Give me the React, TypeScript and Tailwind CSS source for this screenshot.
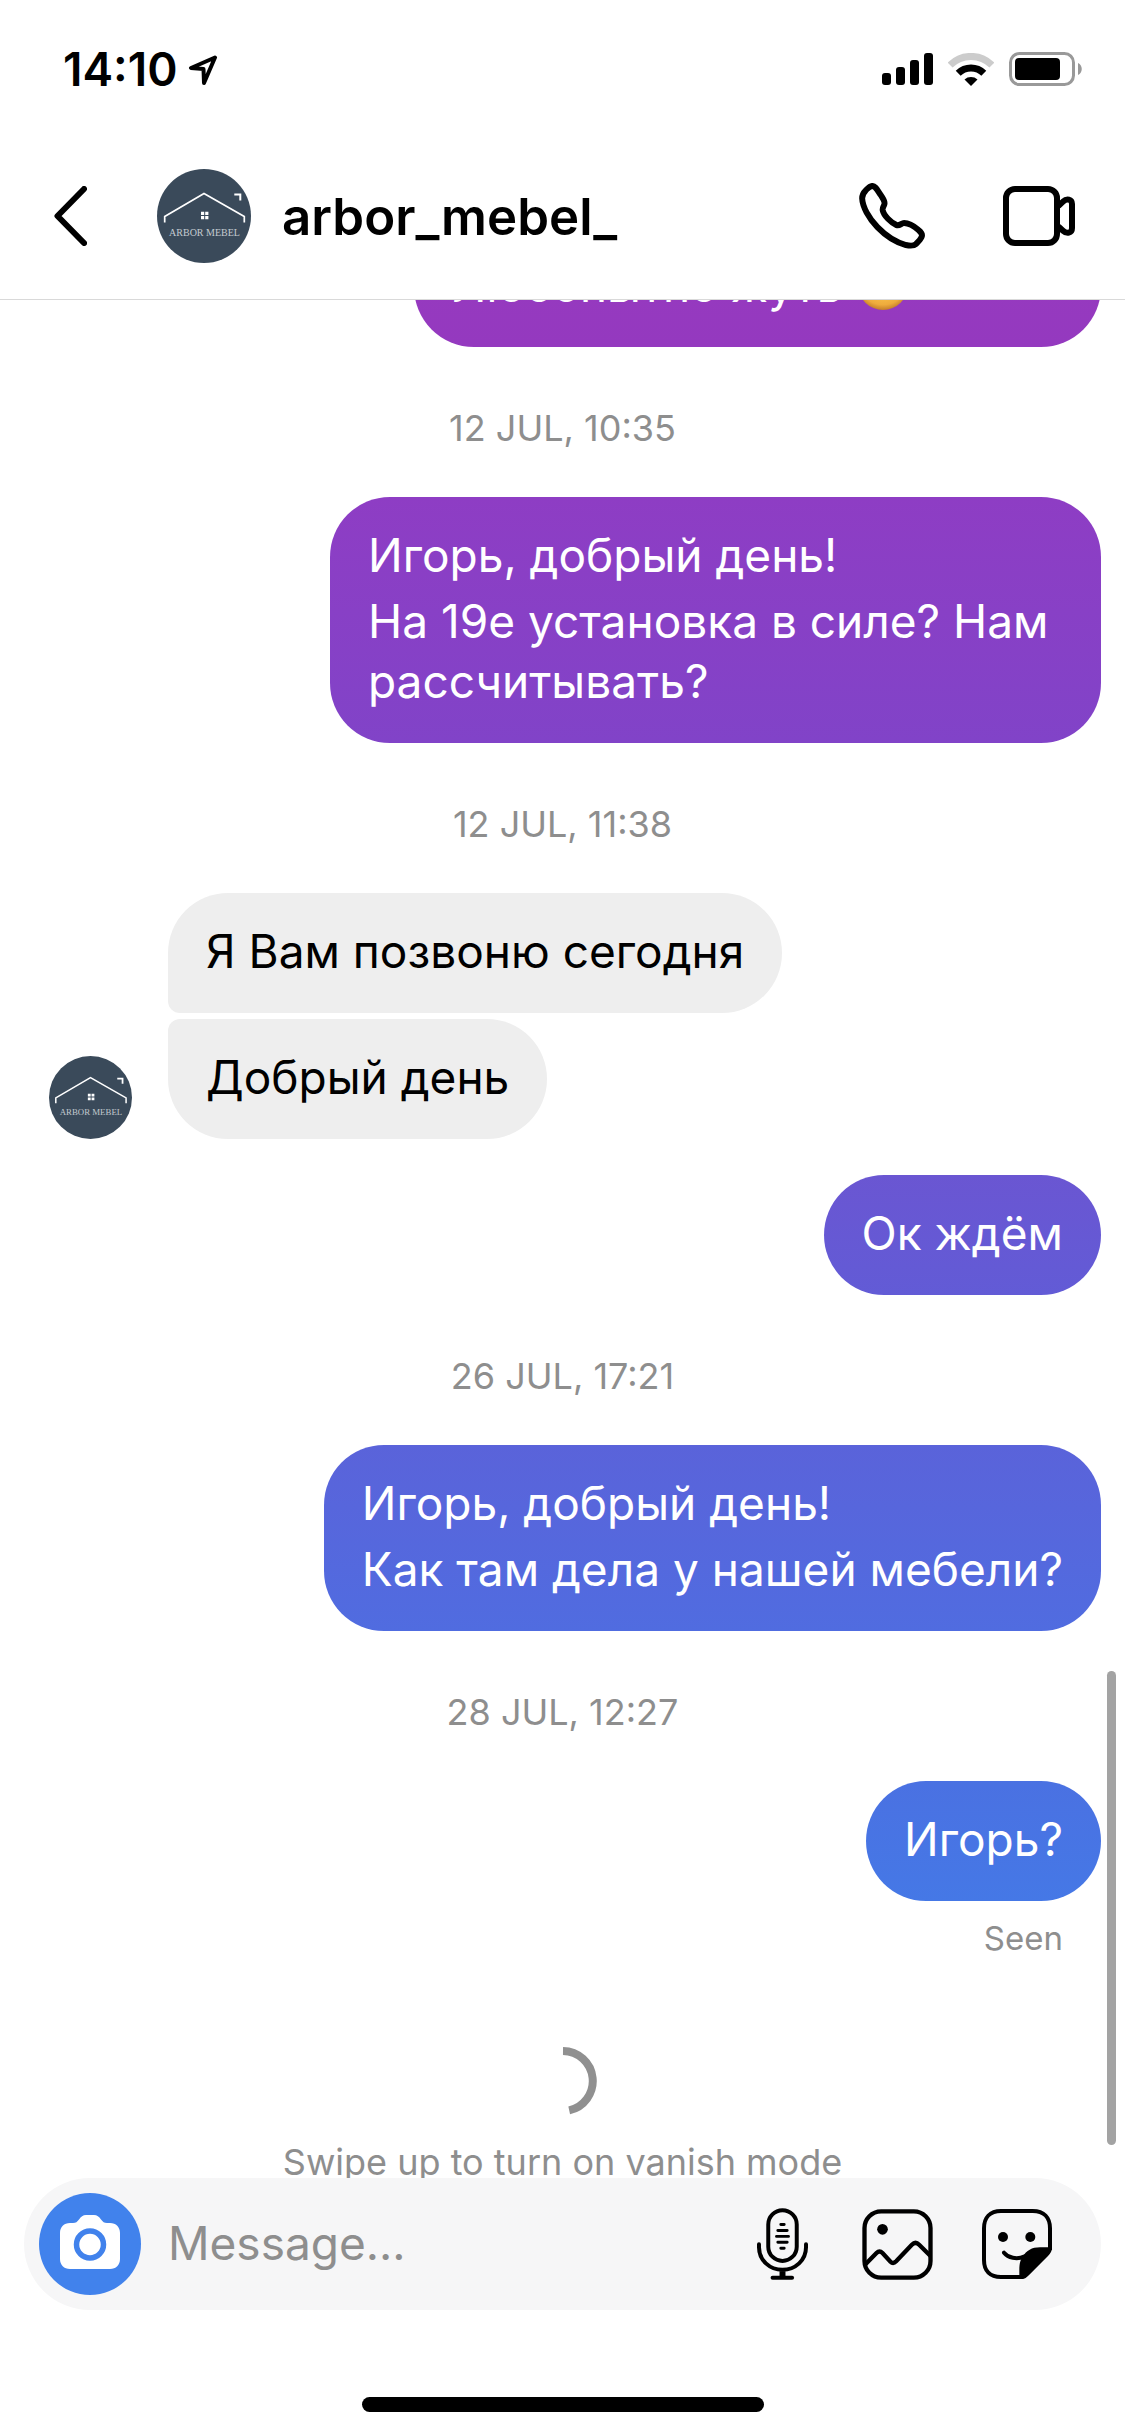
import type { ReactNode } from "react";

function Avatar({ className }: { className: string }) {
  return (
    <svg viewBox="0 0 94 94" className={className} role="img" aria-label="Arbor Mebel">
      <circle cx="47" cy="47" r="47" fill="#3a4a5a" />
      <g fill="none" stroke="#ffffff">
        <path d="M7.7 53.5V47.5L47 24.5L87.3 47.5V53.5" strokeWidth="1.7" />
        <path d="M77.3 25.5H83.3V31.5" strokeWidth="2" />
      </g>
      <path d="M44 42.7h3.2v3.2H44zM48.2 42.7h3.2v3.2h-3.2zM44 47h3.2v3.2H44zM48.2 47h3.2v3.2h-3.2z" fill="#ffffff" />
      <text x="47.5" y="67" textAnchor="middle" fontSize="10" fill="#c3cad0" fontFamily="Liberation Serif, serif">
        ARBOR MEBEL
      </text>
    </svg>
  );
}

function StatusBar() {
  return (
    <div className="flex h-[132px] shrink-0 items-center pl-[63px] pr-[43px] pt-[6px]">
      <span className="text-[46px] leading-[54px] font-semibold">14:10</span>
      <svg viewBox="0 0 30 31" className="ml-[10px] h-[31px] w-[30px]" fill="none" stroke="#000" strokeWidth="4" strokeLinejoin="round">
        <path d="M27 3.5L3 14L15.5 15L16 29Z" />
      </svg>
      <div className="ml-auto flex items-center">
        <svg viewBox="0 0 51 32" className="h-8 w-[51px]">
          <rect x="0" y="20" width="9" height="12" rx="3" />
          <rect x="14" y="14" width="9" height="18" rx="3" />
          <rect x="28" y="7" width="9" height="25" rx="3" />
          <rect x="42" y="0" width="9" height="32" rx="3" />
        </svg>
        <svg viewBox="0 0 46 33" className="ml-[15px] h-[33px] w-[46px]" fill="none" strokeWidth="7">
          <path d="M2.1 12.1A29.5 29.5 0 0 1 43.9 12.1" stroke="#cccccc" />
          <path d="M10.2 20.2A18.2 18.2 0 0 1 35.8 20.2" stroke="#000" />
          <path d="M23 33L16.5 26.5A9.8 9.8 0 0 1 29.5 26.5Z" fill="#000" />
        </svg>
        <svg viewBox="0 0 73 34" className="ml-[15px] h-[34px] w-[73px]">
          <rect x="1.5" y="1.5" width="63" height="31" rx="9" fill="none" stroke="#999999" strokeWidth="3" />
          <rect x="6" y="6" width="45" height="22" rx="4" />
          <path d="M69 11C74 13 74 21 69 23Z" fill="#999999" />
        </svg>
      </div>
    </div>
  );
}

function ChatHeader() {
  return (
    <header className="flex h-[168px] shrink-0 items-center border-b border-[#d9d9d9] pl-[54px] pr-[50px]">
      <button type="button" aria-label="Back">
        <svg viewBox="0 0 33 60" className="h-[60px] w-[33px]" fill="none" stroke="#000" strokeWidth="6" strokeLinecap="round" strokeLinejoin="round">
          <path d="M30 3L3.5 30L30 57" />
        </svg>
      </button>
      <Avatar className="ml-[70px] size-[94px]" />
      <h1 className="ml-[31px] pt-[2px] text-[51px] leading-[60px] font-semibold">arbor_mebel_</h1>
      <button type="button" aria-label="Audio call" className="ml-auto">
        <svg viewBox="57 428 198 199" className="size-[66px]" fill="none" stroke="#000" strokeWidth="18">
          <path d="M96 437C106 436 113 452 122 464C130 477 136 484 133 492C131 499 127 502 128 510C131 526 153 548 170 555C178 558 184 550 190 549C204 548 222 558 236 570C246 578 248 585 245 591C242 598 234 606 228 612C222 618 208 617 198 615C172 608 138 588 112 561C86 534 67 500 66 474C66 462 71 456 77 450C84 443 88 438 96 437Z" />
        </svg>
      </button>
      <button type="button" aria-label="Video call" className="ml-[78px]">
        <svg viewBox="489 438 216 180" className="h-[60px] w-[72px]" fill="none" stroke="#000" strokeWidth="18">
          <rect x="498" y="447" width="153" height="162" rx="27" />
          <path d="M655 498L669 485C680 474 696 477 696 492V564C696 580 680 582 669 572L655 559" />
        </svg>
      </button>
    </header>
  );
}

function DateLabel({ children }: { children: ReactNode }) {
  return (
    <time className="flex h-[150px] shrink-0 items-center justify-center pt-3 text-[36px] leading-[42px] text-[#8e8e8e]">
      {children}
    </time>
  );
}

const bubbleBase = "px-[38px] pt-[28px] pb-[32px] text-[46px] leading-[60px]";

function Sent({ tone, children }: { tone: string; children: ReactNode }) {
  return (
    <div className={`${bubbleBase} mr-6 shrink-0 self-end rounded-[60px] bg-linear-to-b text-white ${tone}`}>
      {children}
    </div>
  );
}

function Received({ corner, children }: { corner: string; children: ReactNode }) {
  return <div className={`${bubbleBase} rounded-[60px] bg-[#eeeeee] text-black ${corner}`}>{children}</div>;
}

function SmileEmoji() {
  return (
    <svg viewBox="0 0 50 50" className="inline-block size-[50px]" role="img" aria-label="Smile">
      <defs>
        <radialGradient id="face" cx="0.5" cy="0.4" r="0.62">
          <stop offset="0.5" stopColor="#f9c04a" />
          <stop offset="0.8" stopColor="#eeab3c" />
          <stop offset="1" stopColor="#bd7526" />
        </radialGradient>
      </defs>
      <circle cx="25" cy="25" r="25" fill="url(#face)" />
      <circle cx="17" cy="19" r="3" fill="#5b3413" />
      <circle cx="33" cy="19" r="3" fill="#5b3413" />
      <path d="M14 27Q25 38 36 27" fill="none" stroke="#5b3413" strokeWidth="3" />
    </svg>
  );
}

function Composer() {
  return (
    <form
      className="mx-6 flex h-[132px] shrink-0 items-center rounded-full bg-[#f6f6f7] pl-[15px] pr-[49px]"
      onSubmit={(event) => event.preventDefault()}
    >
      <button type="button" aria-label="Camera" className="flex size-[102px] shrink-0 items-center justify-center rounded-full bg-[#4182ec]">
        <svg viewBox="0 0 60 54" className="mb-1 h-[54px] w-[60px]">
          <path
            d="M10 8H13C16 8 17 7 19 4.500C21 1.500 23 0 26 0H34C37 0 39 1.500 41 4.500C43 7 44 8 47 8H50C56 8 60 12 60 18V44C60 50 56 54 50 54H10C4 54 0 50 0 44V18C0 12 4 8 10 8Z"
            fill="#ffffff"
          />
          <circle cx="30" cy="29.500" r="13.500" fill="#ffffff" stroke="#4182ec" strokeWidth="5.500" />
        </svg>
      </button>
      <input
        type="text"
        aria-label="Message"
        placeholder="Message..."
        className="ml-[27px] min-w-0 flex-1 bg-transparent pb-[2px] text-[46px] leading-[60px] outline-none placeholder:text-[#8e8e8e]"
      />
      <button type="button" aria-label="Voice message" className="shrink-0">
        <svg viewBox="82 54 154 216" className="h-[72px] w-[51px]" fill="none" stroke="#000" strokeWidth="12" strokeLinecap="round">
          <rect x="116" y="60" width="86" height="153" rx="43" />
          <path d="M88 163V172C88 211 120 240 159 240S230 211 230 172V163" />
          <path d="M159 244V260" strokeWidth="18" strokeLinecap="butt" />
          <path d="M129 264H188" />
          <path d="M154 103H164M145 121H173M141 139H177M145 157H173M154 175H164" strokeWidth="9" />
        </svg>
      </button>
      <button type="button" aria-label="Gallery" className="ml-[54px] shrink-0">
        <svg viewBox="397 57 212 213" className="size-[71px]" fill="none" stroke="#000" strokeWidth="13">
          <rect x="404" y="64" width="198" height="199" rx="50" />
          <circle cx="458" cy="118" r="16" fill="#000" stroke="none" />
          <path d="M404 226L440 189Q449 180 458 189L482 215Q490 223 499 214L546 164Q557 153 568 164L602 198" />
        </svg>
      </button>
      <button type="button" aria-label="Sticker" className="ml-[49px] shrink-0">
        <svg viewBox="756 57 210 210" className="size-[70px]" fill="none" stroke="#000" strokeWidth="12">
          <path d="M880 261H813C780 261 762 243 762 210V115C762 82 780 63 813 63H908C942 63 960 82 960 115V180" />
          <circle cx="819" cy="141" r="15" fill="#000" stroke="none" />
          <circle cx="901" cy="141" r="15" fill="#000" stroke="none" />
          <path d="M822 188C834 203 860 210 884 199" strokeLinecap="round" />
          <path
            d="M868 266V240C868 218 872 208 878 200C890 182 905 172 930 172H966C966 184 962 190 954 198L898 254C890 262 884 267 876 267Z"
            fill="#000"
            stroke="none"
          />
        </svg>
      </button>
    </form>
  );
}

export default function App() {
  return (
    <div className="flex h-screen flex-col bg-white font-['Inter','Noto_Sans',sans-serif] text-black">
      <StatusBar />
      <ChatHeader />
      <main className="relative flex min-h-0 flex-1 flex-col justify-end overflow-hidden">
        <Sent tone="from-[#983abf] to-[#9439bf] w-[687px] flex items-center gap-4 whitespace-nowrap">
          Любопытно жуть <SmileEmoji />
        </Sent>
        <DateLabel>12 JUL, 10:35</DateLabel>
        <Sent tone="from-[#8e3dc4] to-[#8143c8] max-w-[771px]">
          <p>Игорь, добрый день!</p>
          <p className="mt-[6px]">На 19е установка в силе? Нам рассчитывать?</p>
        </Sent>
        <DateLabel>12 JUL, 11:38</DateLabel>
        <div className="flex shrink-0 items-end">
          <Avatar className="ml-[49px] size-[83px]" />
          <div className="ml-9 flex flex-col items-start gap-[6px]">
            <Received corner="rounded-bl-[12px]">Я Вам позвоню сегодня</Received>
            <Received corner="rounded-tl-[12px]">Добрый день</Received>
          </div>
        </div>
        <div className="mt-9 flex shrink-0 flex-col">
          <Sent tone="from-[#6a56d2] to-[#625bd6]">Ок ждём</Sent>
        </div>
        <DateLabel>26 JUL, 17:21</DateLabel>
        <Sent tone="from-[#5a63da] to-[#506ce0]">
          <p>Игорь, добрый день!</p>
          <p className="mt-[6px]">Как там дела у нашей мебели?</p>
        </Sent>
        <DateLabel>28 JUL, 12:27</DateLabel>
        <Sent tone="from-[#4a71e2] to-[#4578e6]">Игорь?</Sent>
        <p className="mt-4 mr-[62px] shrink-0 self-end text-[33px] leading-[42px] text-[#8e8e8e]">Seen</p>
        <svg viewBox="0 0 68 68" className="mt-[88px] size-[68px] shrink-0 self-center" fill="none" stroke="#909090" strokeWidth="8">
          <path d="M34 4A30 30 0 0 1 40.2 63.3" />
        </svg>
        <p className="mt-[26px] -mb-[5px] shrink-0 text-center text-[36px] leading-[42px] text-[#8e8e8e]">
          Swipe up to turn on vanish mode
        </p>
        <div className="absolute right-[9px] bottom-[33px] h-[474px] w-[9px] rounded-full bg-[#a3a3a3]" />
      </main>
      <Composer />
      <div className="mt-[87px] mb-6 h-[15px] w-[402px] shrink-0 self-center rounded-full bg-black" />
    </div>
  );
}
